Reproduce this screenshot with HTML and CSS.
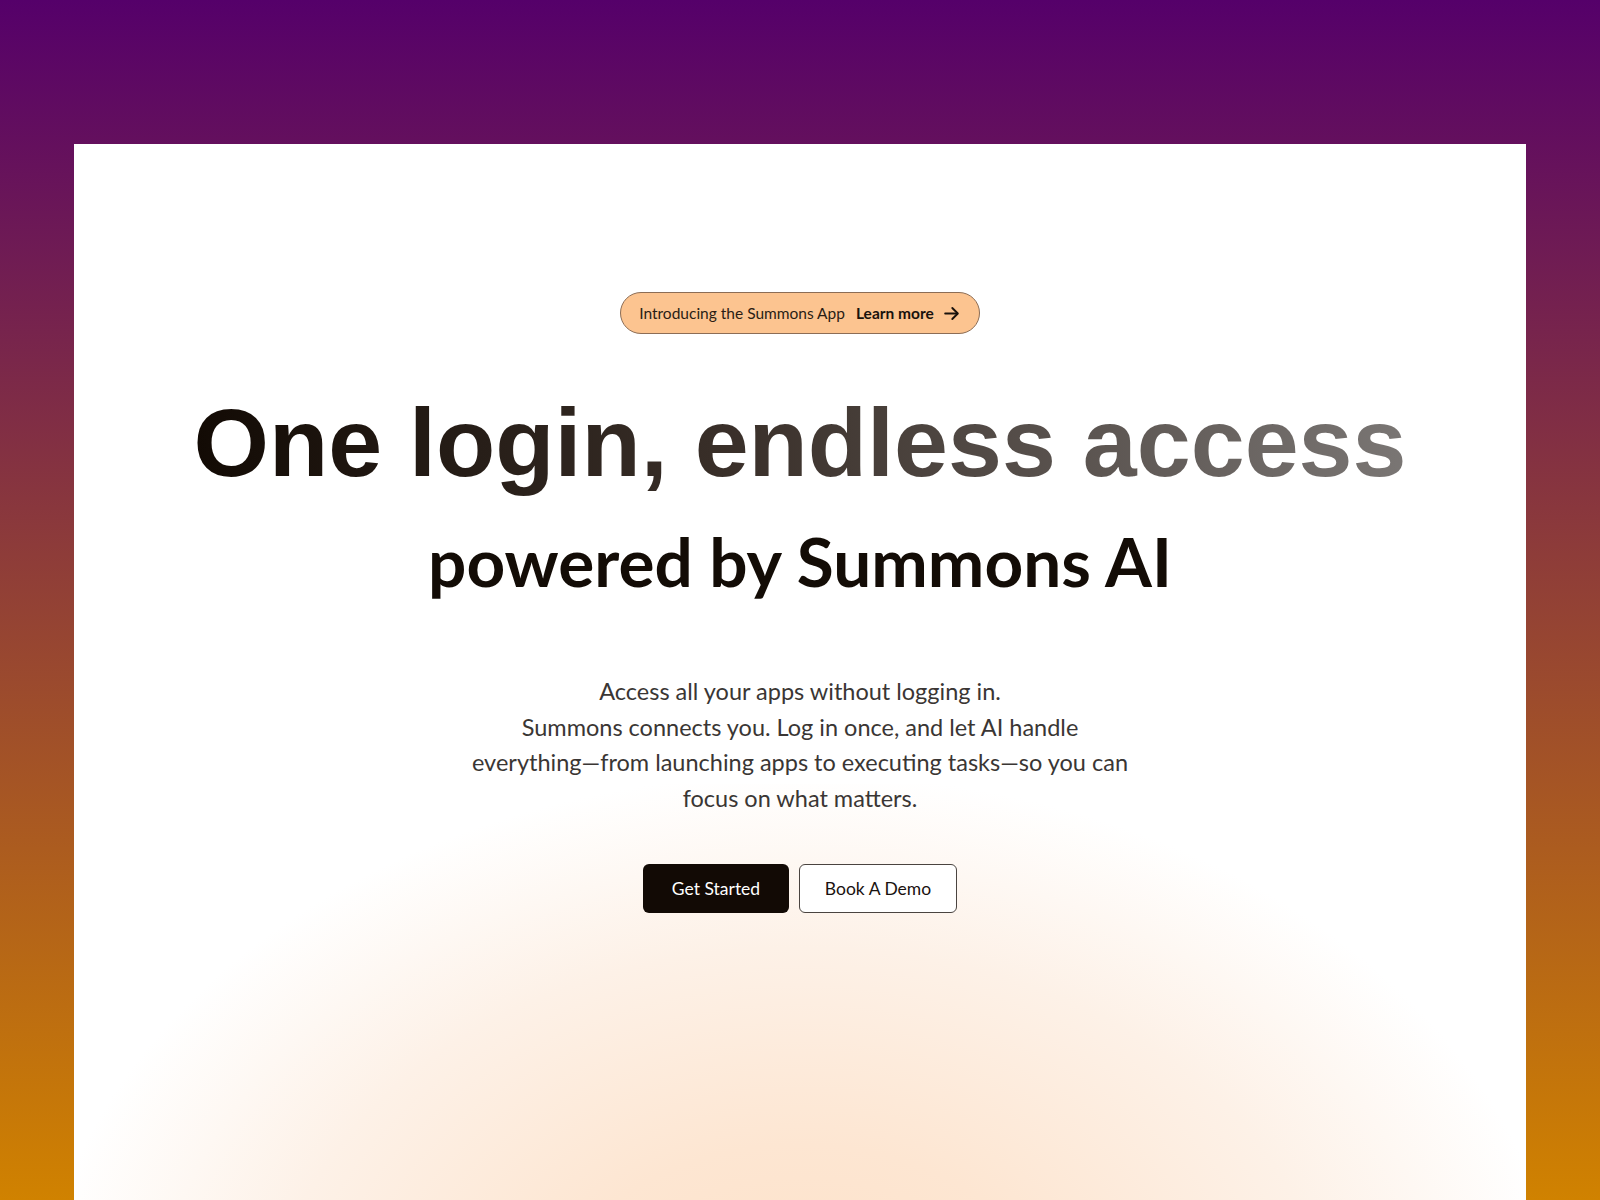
FILE: index.html
```html
<!DOCTYPE html>
<html lang="en">
<head>
    <meta charset="UTF-8">
    <meta name="viewport" content="width=device-width, initial-scale=1.0">
    <title>Summons - One login, endless access</title>
    <link rel="stylesheet" href="styles.css">
</head>
<body>
    <div class="page">
        <section class="hero">
            <div class="glow"></div>
            <a class="announce" href="#">
                <span class="announce-text">Introducing the Summons App</span>
                <span class="announce-link">Learn more
                    <svg width="19" height="19" viewBox="0 0 24 24" fill="none" stroke="currentColor" stroke-width="2.4" stroke-linecap="round" stroke-linejoin="round">
                        <path d="M4 12h15"/>
                        <path d="M13 5l7 7-7 7"/>
                    </svg>
                </span>
            </a>
            <h1 class="title">One login, endless access</h1>
            <h2 class="subtitle">powered by Summons AI</h2>
            <p class="lead">
                Access all your apps without logging in.<br>
                Summons connects you. Log in once, and let AI handle<br>
                everything—from launching apps to executing tasks—so you can<br>
                focus on what matters.
            </p>
            <div class="actions">
                <a class="btn btn-dark" href="#">Get Started</a>
                <a class="btn btn-light" href="#">Book A Demo</a>
            </div>
        </section>
    </div>
</body>
</html>
```

FILE: styles.css
```css
html, body {
    margin: 0;
    padding: 0;
    height: 1200px;
    overflow: hidden;
}

body {
    background: linear-gradient(to bottom, #55006a, #d08200);
    font-family: 'Lato', 'Noto Sans', sans-serif;
    color: #1a1210;
}

.page {
    padding: 144px 74px 0;
}

.hero {
    position: relative;
    overflow: hidden;
    background: #fff;
    height: 1056px;
    display: flex;
    flex-direction: column;
    align-items: center;
    text-align: center;
    padding-top: 148px;
    box-sizing: border-box;
}

/* soft peach light at the bottom */
.glow {
    position: absolute;
    left: 50%;
    top: 640px;
    width: 1500px;
    height: 900px;
    transform: translateX(-50%);
    background: radial-gradient(ellipse at 50% 62%, #fde0c6 0%, #fde6d2 25%, #fdf1e7 50%, rgba(255, 255, 255, 0) 72%);
    pointer-events: none;
}

.announce {
    position: relative;
    display: flex;
    align-items: center;
    gap: 11px;
    height: 42px;
    padding: 0 18px;
    box-sizing: border-box;
    border: 1px solid #8c6d55;
    border-radius: 21px;
    background: #fcc490;
    text-decoration: none;
    color: #2a1d14;
    font-size: 15.5px;
}

.announce-link {
    display: flex;
    align-items: center;
    gap: 8px;
    font-weight: bold;
    color: #1a120c;
}

.title {
    position: relative;
    margin: 49px 0 0;
    font-family: 'Liberation Sans', Arial, sans-serif;
    font-size: 97px;
    font-weight: bold;
    line-height: 120px;
    background: linear-gradient(to right, #120a04 0%, #3a302a 45%, #7a7674 100%);
    -webkit-background-clip: text;
    background-clip: text;
    color: transparent;
}

.subtitle {
    position: relative;
    margin: 18px 0 0;
    font-size: 67.5px;
    font-weight: bold;
    line-height: 80px;
    color: #130c06;
}

.lead {
    position: relative;
    width: 720px;
    margin: 73px 0 0;
    font-size: 23.5px;
    line-height: 35.7px;
    color: #3a3634;
}

.actions {
    position: relative;
    display: flex;
    gap: 10px;
    margin-top: 47px;
}

.btn {
    display: flex;
    align-items: center;
    justify-content: center;
    height: 49px;
    box-sizing: border-box;
    border-radius: 6px;
    font-size: 17.5px;
    text-decoration: none;
}

.btn-dark {
    width: 146px;
    background: #120a05;
    color: #fff;
}

.btn-light {
    width: 158px;
    background: #fff;
    border: 1px solid #4a4440;
    color: #1a1210;
}
```
